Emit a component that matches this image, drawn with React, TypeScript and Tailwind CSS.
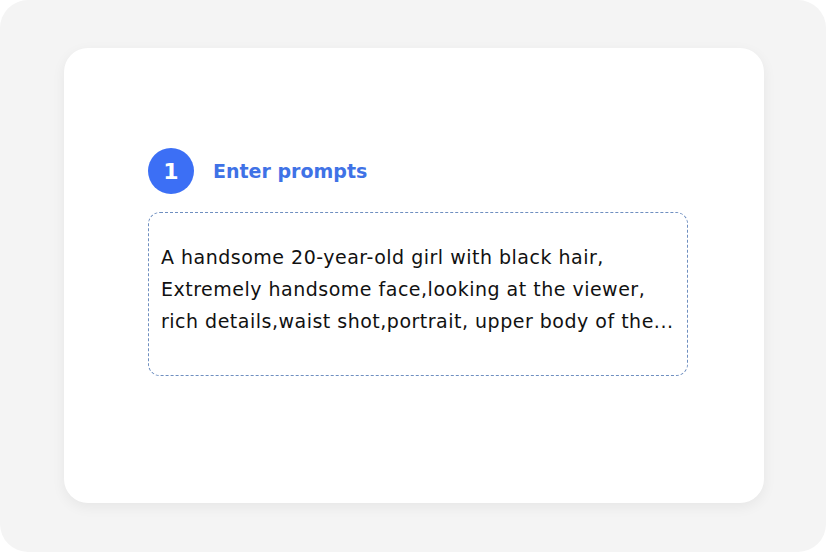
import React from "react";

export default function App() {
  return (
    <div className="w-[826px] h-[552px] bg-white" style={{ fontFamily: '"DejaVu Sans", sans-serif' }}>
      <div className="w-full h-full rounded-[28px] bg-[#f4f4f4] pt-[48px] pl-[64px]">
        <div className="w-[700px] h-[455px] rounded-[24px] bg-white shadow-[0_4px_14px_rgba(0,0,0,0.06)] pt-[100px] pl-[84px]">
          <div className="flex items-center gap-[19px]">
            <div className="w-[46px] h-[46px] rounded-full bg-[#3c6ff5] flex items-center justify-center text-white text-[22px] font-bold">1</div>
            <div className="text-[#3f72e6] text-[19px] font-bold">Enter prompts</div>
          </div>
          <div className="mt-[18px] w-[540px] h-[164px] rounded-[12px] border border-dashed border-[#6f8fc0] pt-[28px] pl-[12px] text-[19px] leading-[32px] tracking-[0.5px] text-[#111111]">
            <div>A handsome 20-year-old girl with black hair,</div>
            <div>Extremely handsome face,looking at the viewer,</div>
            <div>rich details,waist shot,portrait, upper body of the...</div>
          </div>
        </div>
      </div>
    </div>
  );
}
